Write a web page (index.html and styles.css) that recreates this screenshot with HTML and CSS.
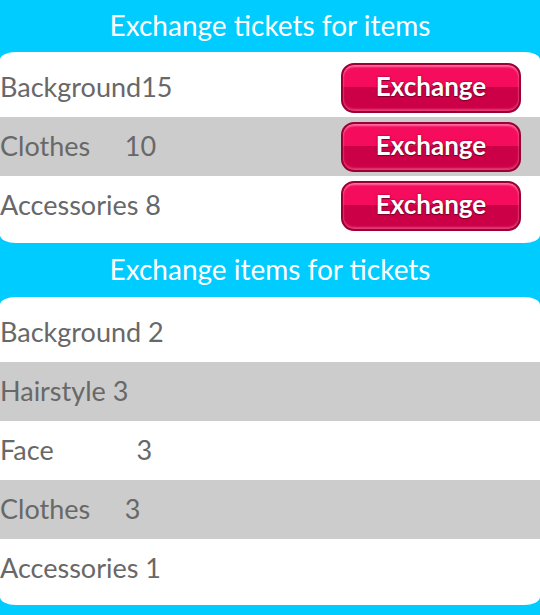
FILE: index.html
```html
<!DOCTYPE html>
<html lang="en-US">
<head>
    <meta charset="utf-8">
    <meta name="viewport" content="width=device-width, initial-scale=1.0">
    <title>Ticket Exchange</title>
    <link rel="stylesheet" href="styles.css">
</head>
<body>
    <div class="section-title">Exchange tickets for items</div>
    <div class="panel">
        <div class="row">
            <span class="item">Background15</span>
            <button type="button" class="exchange-btn">Exchange</button>
        </div>
        <div class="row alt">
            <span class="item">Clothes     10</span>
            <button type="button" class="exchange-btn">Exchange</button>
        </div>
        <div class="row">
            <span class="item">Accessories 8</span>
            <button type="button" class="exchange-btn">Exchange</button>
        </div>
    </div>

    <div class="section-title second">Exchange items for tickets</div>
    <div class="panel last">
        <div class="row"><span class="item">Background 2</span></div>
        <div class="row alt"><span class="item">Hairstyle 3</span></div>
        <div class="row"><span class="item">Face            3</span></div>
        <div class="row alt"><span class="item">Clothes     3</span></div>
        <div class="row"><span class="item">Accessories 1</span></div>
    </div>
</body>
</html>
```

FILE: styles.css
```css
body {
    margin: 0;
    background-color: #00ccff;
    font-family: 'Lato', 'Open Sans', sans-serif;
    height: 615px;
    overflow: hidden;
}

.section-title {
    height: 52px;
    line-height: 50px;
    text-align: center;
    color: #ffffff;
    font-size: 28px;
}

.section-title.second {
    height: 54px;
    line-height: 53px;
}

.panel {
    background-color: #ffffff;
    border-radius: 16px / 8px;
    padding: 6px 0 8px;
}

.panel.last {
    padding-bottom: 7px;
}

.row {
    height: 59px;
    display: flex;
    align-items: center;
    font-size: 27px;
    color: #686868;
}

.row.alt {
    background-color: #cccccc;
}

.item {
    white-space: pre;
    padding-bottom: 2px;
}

.exchange-btn {
    margin-left: auto;
    margin-right: 19px;
    width: 180px;
    height: 50px;
    border: 2px solid #9a0034;
    border-radius: 13px;
    background: linear-gradient(#f50c5c 0, #f50c5c 48%, #cc0047 48%, #cc0047 100%);
    box-shadow: inset 0 2px 2px rgba(255, 150, 190, 0.7), inset 0 -2px 2px rgba(255, 120, 170, 0.5);
    color: #ffffff;
    font-family: 'Lato', 'Open Sans', sans-serif;
    font-weight: bold;
    font-size: 26px;
    text-shadow: 0 0 2px #7a0028, 0 1px 1px #7a0028;
    padding: 0 0 3px;
    cursor: pointer;
}
```
